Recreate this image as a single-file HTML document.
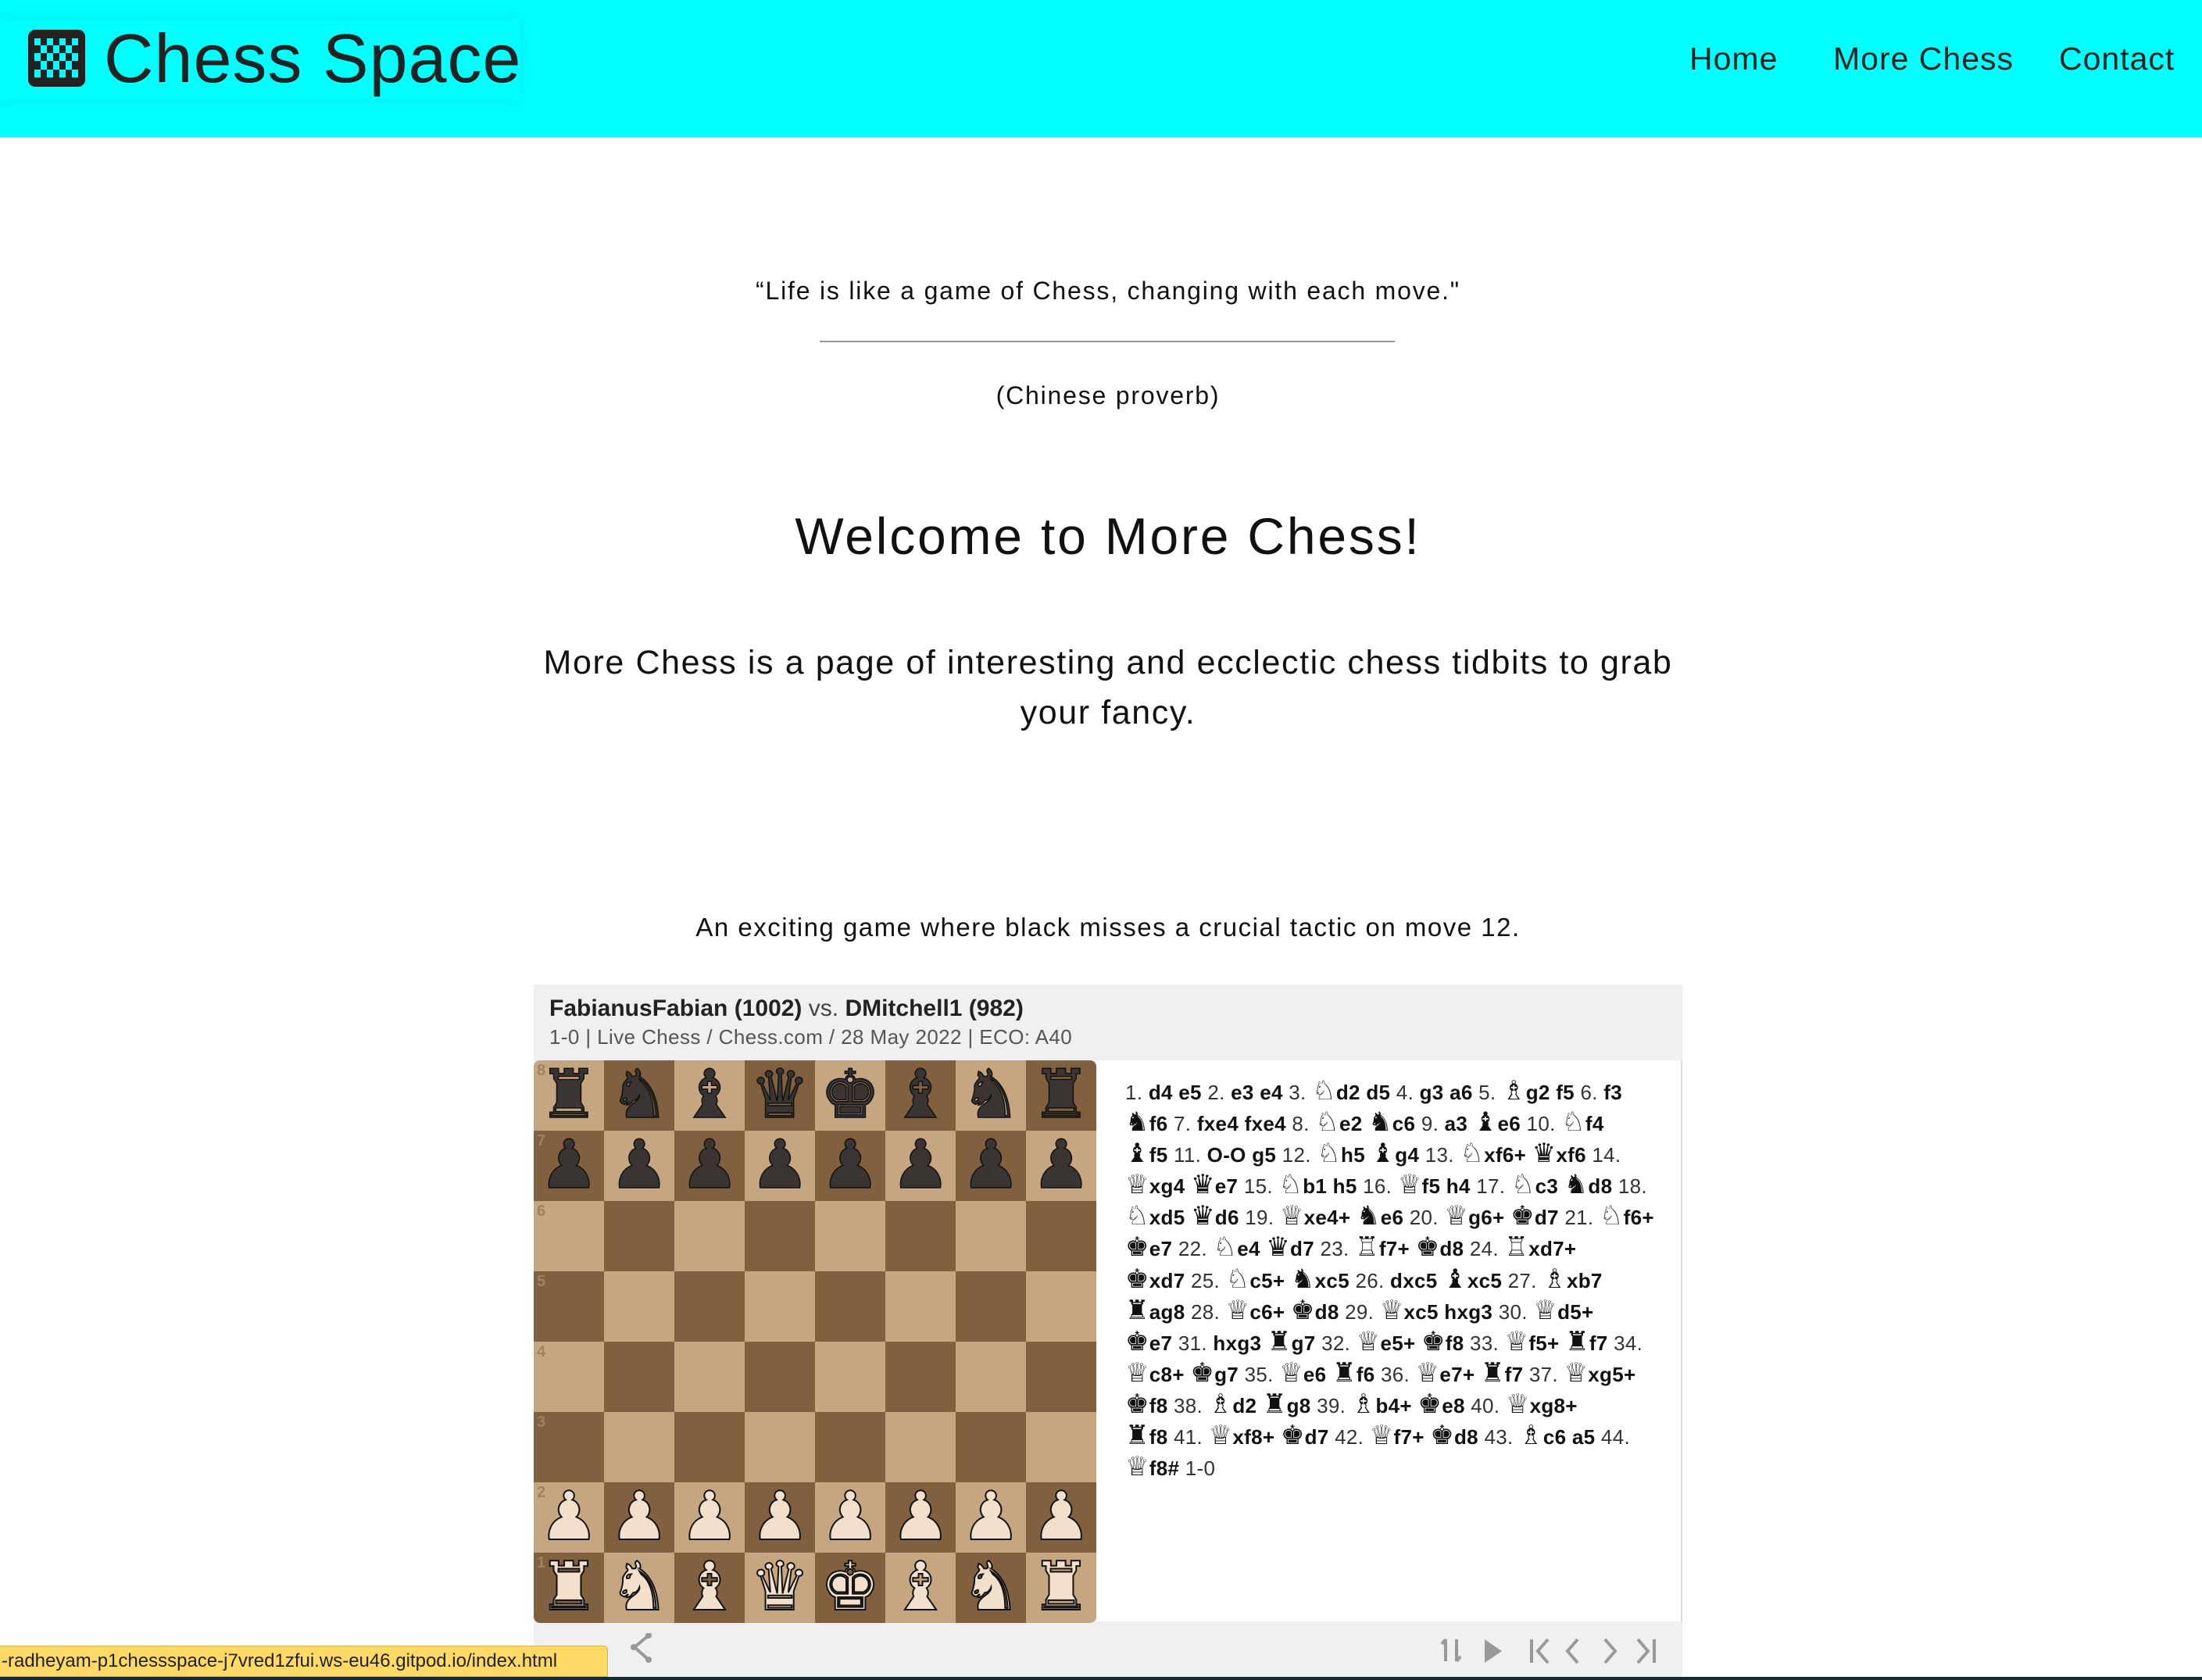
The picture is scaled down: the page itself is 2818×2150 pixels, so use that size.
<!DOCTYPE html>
<html><head><meta charset="utf-8"><style>
*{margin:0;padding:0;box-sizing:border-box}
body{width:2818px;height:2150px;background:#fff;font-family:"Liberation Sans",sans-serif;color:#111;position:relative;overflow:hidden}
.hdr{position:absolute;left:0;top:0;width:2818px;height:176px;background:#00ffff}
.logo{position:absolute;left:0;top:25px;width:665px;height:102px;background:#00ffff;box-shadow:0 0 20px rgba(0,180,180,.25)}
.ico{position:absolute;left:36px;top:38px;width:73px;height:73px;background:#222;border-radius:9px}
.ttl{position:absolute;left:133px;top:24px;font-size:88px;color:#222;letter-spacing:1px}
.nav{position:absolute;top:52px;font-size:41px;color:#222;letter-spacing:1px}
.c{position:absolute;left:0;width:2836px;text-align:center}
.board{position:absolute;left:683px;top:1357px;width:720px;height:720px;display:grid;grid-template-columns:repeat(8,90px);grid-template-rows:repeat(8,90px);border-radius:8px;overflow:hidden}
.board div{position:relative;font-family:"DejaVu Sans",sans-serif;font-size:86px;line-height:88px;text-align:center}
.l{background:#c6a681}.d{background:#80603f}
.b{color:#3a3533;-webkit-text-stroke:1.5px #111}
.w{color:#f2dfcc;-webkit-text-stroke:2px #111}
.rk{position:absolute;left:4px;top:2px;font-family:"Liberation Sans",sans-serif;font-size:20px;line-height:22px;font-weight:bold;color:#a58060;-webkit-text-stroke:0}
.moves{position:absolute;left:1440px;top:1378px;font-size:26px;line-height:40.1px;color:#333;white-space:nowrap;letter-spacing:0.3px}
.moves b{color:#111}
.fg{font-family:"DejaVu Sans",sans-serif;font-weight:normal;font-size:34px;line-height:20px;color:#111}
</style></head><body>
<div class="hdr"></div>
<div class="logo"></div>
<div class="ico"><svg width="73" height="73" viewBox="0 0 73 73"><g fill="#00ffff">
<rect x="8" y="11" width="8" height="9"/><rect x="24" y="11" width="8" height="9"/><rect x="40" y="11" width="8" height="9"/><rect x="56" y="11" width="8" height="9"/>
<rect x="16" y="20" width="8" height="10"/><rect x="32" y="20" width="8" height="10"/><rect x="48" y="20" width="8" height="10"/>
<rect x="8" y="30" width="8" height="10"/><rect x="24" y="30" width="8" height="10"/><rect x="40" y="30" width="8" height="10"/><rect x="56" y="30" width="8" height="10"/>
<rect x="16" y="40" width="8" height="11"/><rect x="32" y="40" width="8" height="11"/><rect x="48" y="40" width="8" height="11"/>
<rect x="8" y="51" width="8" height="10"/><rect x="24" y="51" width="8" height="10"/><rect x="40" y="51" width="8" height="10"/><rect x="56" y="51" width="8" height="10"/>
</g></svg></div>
<div class="ttl">Chess Space</div>
<div class="nav" style="left:2162px">Home</div>
<div class="nav" style="left:2346px">More Chess</div>
<div class="nav" style="left:2635px">Contact</div>

<div class="c" style="top:354px;font-size:32px;letter-spacing:1.8px">“Life is like a game of Chess, changing with each move."</div>
<div style="position:absolute;left:1049px;top:436px;width:736px;height:2px;background:#999"></div>
<div class="c" style="top:488px;font-size:32px;letter-spacing:1.8px">(Chinese proverb)</div>
<div class="c" style="top:648px;font-size:66px;letter-spacing:2.8px">Welcome to More Chess!</div>
<div class="c" style="top:816px;font-size:43px;line-height:64px;left:683px;width:1470px;letter-spacing:1.6px">More Chess is a page of interesting and ecclectic chess tidbits to grab your fancy.</div>
<div class="c" style="top:1168px;font-size:33px;letter-spacing:1.5px">An exciting game where black misses a crucial tactic on move 12.</div>

<div style="position:absolute;left:683px;top:1260px;width:1470px;height:890px;background:#f0f0f0"></div>
<div style="position:absolute;left:1403px;top:1357px;width:750px;height:718px;background:#fff;border-right:2px solid #ddd"></div>
<div style="position:absolute;left:703px;top:1274px;font-size:30px;font-weight:bold;color:#222">FabianusFabian (1002) <span style="font-weight:normal;color:#444">vs.</span> DMitchell1 (982)</div>
<div style="position:absolute;left:703px;top:1312px;font-size:26px;color:#555;letter-spacing:0.4px">1-0 | Live Chess / Chess.com / 28 May 2022 | ECO: A40</div>

<div class="board">
<div class="l b"><span class="rk">8</span>♜</div><div class="d b">♞</div><div class="l b">♝</div><div class="d b">♛</div><div class="l b">♚</div><div class="d b">♝</div><div class="l b">♞</div><div class="d b">♜</div>
<div class="d b"><span class="rk">7</span>♟</div><div class="l b">♟</div><div class="d b">♟</div><div class="l b">♟</div><div class="d b">♟</div><div class="l b">♟</div><div class="d b">♟</div><div class="l b">♟</div>
<div class="l"><span class="rk">6</span></div><div class="d"></div><div class="l"></div><div class="d"></div><div class="l"></div><div class="d"></div><div class="l"></div><div class="d"></div>
<div class="d"><span class="rk">5</span></div><div class="l"></div><div class="d"></div><div class="l"></div><div class="d"></div><div class="l"></div><div class="d"></div><div class="l"></div>
<div class="l"><span class="rk">4</span></div><div class="d"></div><div class="l"></div><div class="d"></div><div class="l"></div><div class="d"></div><div class="l"></div><div class="d"></div>
<div class="d"><span class="rk">3</span></div><div class="l"></div><div class="d"></div><div class="l"></div><div class="d"></div><div class="l"></div><div class="d"></div><div class="l"></div>
<div class="l w"><span class="rk">2</span>♟</div><div class="d w">♟</div><div class="l w">♟</div><div class="d w">♟</div><div class="l w">♟</div><div class="d w">♟</div><div class="l w">♟</div><div class="d w">♟</div>
<div class="d w"><span class="rk">1</span>♜</div><div class="l w">♞</div><div class="d w">♝</div><div class="l w">♛</div><div class="d w">♚</div><div class="l w">♝</div><div class="d w">♞</div><div class="l w">♜</div>
</div>

<div class="moves">
1. <b>d4 e5</b> 2. <b>e3 e4</b> 3. <b><span class="fg">♘</span>d2 d5</b> 4. <b>g3 a6</b> 5. <b><span class="fg">♗</span>g2 f5</b> 6. <b>f3</b><br>
<b><span class="fg">♞</span>f6</b> 7. <b>fxe4 fxe4</b> 8. <b><span class="fg">♘</span>e2 <span class="fg">♞</span>c6</b> 9. <b>a3 <span class="fg">♝</span>e6</b> 10. <b><span class="fg">♘</span>f4</b><br>
<b><span class="fg">♝</span>f5</b> 11. <b>O-O g5</b> 12. <b><span class="fg">♘</span>h5 <span class="fg">♝</span>g4</b> 13. <b><span class="fg">♘</span>xf6+ <span class="fg">♛</span>xf6</b> 14.<br>
<b><span class="fg">♕</span>xg4 <span class="fg">♛</span>e7</b> 15. <b><span class="fg">♘</span>b1 h5</b> 16. <b><span class="fg">♕</span>f5 h4</b> 17. <b><span class="fg">♘</span>c3 <span class="fg">♞</span>d8</b> 18.<br>
<b><span class="fg">♘</span>xd5 <span class="fg">♛</span>d6</b> 19. <b><span class="fg">♕</span>xe4+ <span class="fg">♞</span>e6</b> 20. <b><span class="fg">♕</span>g6+ <span class="fg">♚</span>d7</b> 21. <b><span class="fg">♘</span>f6+</b><br>
<b><span class="fg">♚</span>e7</b> 22. <b><span class="fg">♘</span>e4 <span class="fg">♛</span>d7</b> 23. <b><span class="fg">♖</span>f7+ <span class="fg">♚</span>d8</b> 24. <b><span class="fg">♖</span>xd7+</b><br>
<b><span class="fg">♚</span>xd7</b> 25. <b><span class="fg">♘</span>c5+ <span class="fg">♞</span>xc5</b> 26. <b>dxc5 <span class="fg">♝</span>xc5</b> 27. <b><span class="fg">♗</span>xb7</b><br>
<b><span class="fg">♜</span>ag8</b> 28. <b><span class="fg">♕</span>c6+ <span class="fg">♚</span>d8</b> 29. <b><span class="fg">♕</span>xc5 hxg3</b> 30. <b><span class="fg">♕</span>d5+</b><br>
<b><span class="fg">♚</span>e7</b> 31. <b>hxg3 <span class="fg">♜</span>g7</b> 32. <b><span class="fg">♕</span>e5+ <span class="fg">♚</span>f8</b> 33. <b><span class="fg">♕</span>f5+ <span class="fg">♜</span>f7</b> 34.<br>
<b><span class="fg">♕</span>c8+ <span class="fg">♚</span>g7</b> 35. <b><span class="fg">♕</span>e6 <span class="fg">♜</span>f6</b> 36. <b><span class="fg">♕</span>e7+ <span class="fg">♜</span>f7</b> 37. <b><span class="fg">♕</span>xg5+</b><br>
<b><span class="fg">♚</span>f8</b> 38. <b><span class="fg">♗</span>d2 <span class="fg">♜</span>g8</b> 39. <b><span class="fg">♗</span>b4+ <span class="fg">♚</span>e8</b> 40. <b><span class="fg">♕</span>xg8+</b><br>
<b><span class="fg">♜</span>f8</b> 41. <b><span class="fg">♕</span>xf8+ <span class="fg">♚</span>d7</b> 42. <b><span class="fg">♕</span>f7+ <span class="fg">♚</span>d8</b> 43. <b><span class="fg">♗</span>c6 a5</b> 44.<br>
<b><span class="fg">♕</span>f8#</b> 1-0
</div>

<svg style="position:absolute;left:700px;top:2090px" width="1470" height="50" viewBox="0 0 1470 50">
<g fill="none" stroke="#999" stroke-width="4">
<path d="M130 3 L112 18 L130 34" />
<path d="M1150 8 v28 M1150 8 l-5 6 M1164 36 v-28 M1164 36 l5 -6"/>
<path d="M1260 8 v30 M1281 8 l-13 15 l13 15"/>
<path d="M1319 8 l-13 15 l13 15"/>
<path d="M1354 8 l13 15 l-13 15"/>
<path d="M1396 8 l13 15 l-13 15 M1417 8 v30"/>
</g>
<circle cx="130" cy="3" r="4" fill="#999"/><circle cx="111" cy="18" r="4" fill="#999"/><circle cx="130" cy="34" r="4" fill="#999"/>
<path d="M1200 8 L1222 23 L1200 38 Z" fill="#999"/>
</svg>
<div style="position:absolute;left:0;top:2106px;width:778px;height:40px;background:#ffd966;border:1px solid #d4b24a;border-left:none;border-radius:0 6px 0 0;font-size:24px;line-height:38px;color:#222;padding-left:2px;white-space:nowrap;overflow:hidden">-radheyam-p1chessspace-j7vred1zfui.ws-eu46.gitpod.io/index.html</div>
<div style="position:absolute;left:0;top:2146px;width:2818px;height:4px;background:#1a2a35"></div>
</body></html>
